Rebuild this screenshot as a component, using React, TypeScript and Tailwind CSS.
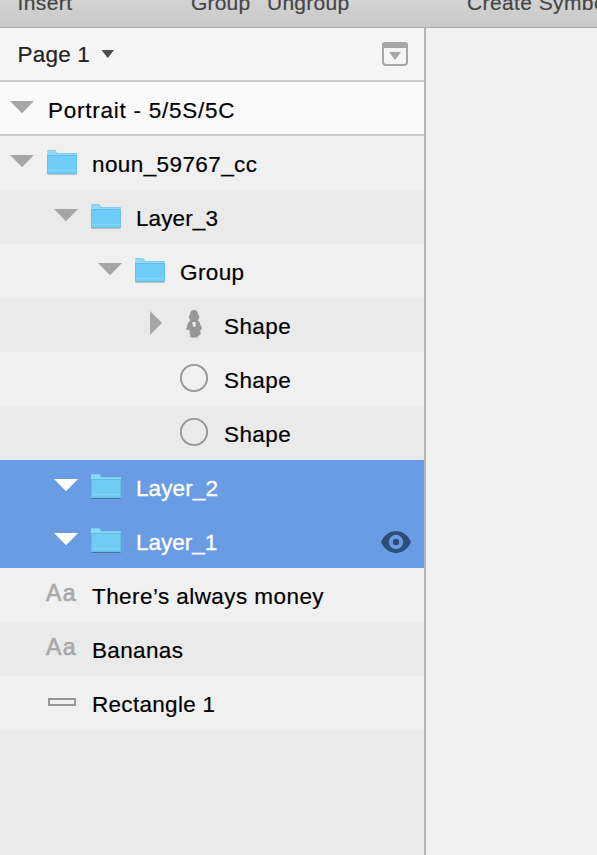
import React from "react";

type Kind = "folder" | "figure" | "circle" | "text" | "rect";

interface Layer {
  name: string;
  kind: Kind;
  indent: string;
  tracking: string;
  arrow?: "down" | "right";
  selected?: boolean;
  eye?: boolean;
}

const layers: Layer[] = [
  { name: "noun_59767_cc", kind: "folder", indent: "pl-0", tracking: "tracking-[0.4px]", arrow: "down" },
  { name: "Layer_3", kind: "folder", indent: "pl-[44px]", tracking: "tracking-[0.1px]", arrow: "down" },
  { name: "Group", kind: "folder", indent: "pl-[88px]", tracking: "tracking-[0.4px]", arrow: "down" },
  { name: "Shape", kind: "figure", indent: "pl-[132px]", tracking: "tracking-[0.4px]", arrow: "right" },
  { name: "Shape", kind: "circle", indent: "pl-[132px]", tracking: "tracking-[0.4px]" },
  { name: "Shape", kind: "circle", indent: "pl-[132px]", tracking: "tracking-[0.4px]" },
  { name: "Layer_2", kind: "folder", indent: "pl-[44px]", tracking: "tracking-[0.1px]", arrow: "down", selected: true },
  { name: "Layer_1", kind: "folder", indent: "pl-[44px]", tracking: "tracking-[0px]", arrow: "down", selected: true, eye: true },
  { name: "There’s always money", kind: "text", indent: "pl-0", tracking: "tracking-[0.43px]" },
  { name: "Bananas", kind: "text", indent: "pl-0", tracking: "tracking-[0.35px]" },
  { name: "Rectangle 1", kind: "rect", indent: "pl-0", tracking: "tracking-[0.3px]" },
];

function Arrow({ dir, className }: { dir: "down" | "right"; className: string }) {
  return (
    <svg className={className} width="44" height="54" viewBox="0 0 44 54">
      <path d={dir === "down" ? "M10 19H34L22 31.2Z" : "M18 13V37L30 25Z"} fill="currentColor" />
    </svg>
  );
}

function FolderIcon({ selected }: { selected?: boolean }) {
  return (
    <svg width="44" height="54" viewBox="0 0 44 54">
      <path d="M3.5 38.5H32.5" stroke="#000" strokeOpacity={selected ? ".28" : ".2"} />
      <path
        d="M3 37V15Q3 14 4 14H10.5Q11.5 14 12 15L13.2 17H32Q33 17 33 18V37Q33 38 32 38H4Q3 38 3 37Z"
        fill={selected ? "#8bd8fa" : "#92dafd"}
      />
      <path d="M3 19H33V37Q33 38 32 38H4Q3 38 3 37Z" fill={selected ? "#70ccf3" : "#6fcdfa"} />
      <path d="M3.5 19V37.5H32.5V19" fill="none" stroke="#5fb9e4" strokeOpacity=".65" />
      <path d="M3 19.5H33" stroke="#62bae3" strokeOpacity=".9" />
      <path d="M4 14.5H10.5L12.5 17.5H32.5" fill="none" stroke="#6fc3e8" strokeOpacity=".55" />
      <path d="M4 34.5H32" stroke="#93dcfc" strokeOpacity=".6" />
    </svg>
  );
}

function LayerIcon({ kind, selected }: { kind: Kind; selected?: boolean }) {
  switch (kind) {
    case "folder":
      return <FolderIcon selected={selected} />;
    case "text":
      return (
        <span className="w-[44px] pl-[2px] pt-[11px] text-[23px] leading-[28px] tracking-[1.5px] text-[#a9a9a9] [-webkit-text-stroke:0.7px_#a9a9a9]">
          Aa
        </span>
      );
    case "circle":
      return (
        <svg width="44" height="54" viewBox="0 0 44 54">
          <circle cx="18" cy="26" r="13.1" fill="none" stroke="#979797" strokeWidth="1.9" />
        </svg>
      );
    case "rect":
      return (
        <svg width="44" height="54" viewBox="0 0 44 54">
          <rect x="5" y="23" width="26" height="6" fill="none" stroke="#979797" strokeWidth="2" />
        </svg>
      );
    default:
      return (
        <svg width="44" height="54" viewBox="0 0 44 54">
          <path
            d="M16.2 12.3L18 12L20 12.4L21.6 14L22 16L23.4 18.2L22.8 20.8L21.8 22.5L23.5 24L24.3 26.5L25.8 29.5L25.6 31.7L23.8 32.5L24.8 34L24.4 36.5L22.5 37.8L21.5 38.6L21.5 39.8L19 39.4L17.5 39.8L14.5 39.6L14.4 38L13.6 35.8L13.8 32.3L11 32L10 30.8L11 28.2L12 25L14.2 22.5L13.2 20.5L12.8 18.5L14 16.4L14.4 14.2Z"
            fill="#979797"
          />
          <path d="M16.3 24H19.7V28.8H17Z" fill="#ebebeb" />
        </svg>
      );
  }
}

function LayerRow({ layer, odd }: { layer: Layer; odd: boolean }) {
  const tone = layer.selected
    ? "bg-[#6a9ce4] text-white [-webkit-text-stroke:0.3px_#fff]"
    : odd
      ? "bg-[#eaeaea] text-black [-webkit-text-stroke:0.2px_#000]"
      : "bg-[#f0f0f0] text-black [-webkit-text-stroke:0.2px_#000]";
  return (
    <li className={`flex h-[54px] ${layer.indent} ${tone}`}>
      {layer.arrow ? (
        <Arrow dir={layer.arrow} className={layer.selected ? "text-white" : "text-[#a6a6a6]"} />
      ) : (
        <span className="w-[44px]" />
      )}
      <LayerIcon kind={layer.kind} selected={layer.selected} />
      <span className={`flex-1 whitespace-nowrap pl-[4px] pt-[15px] leading-[28px] ${layer.tracking}`}>{layer.name}</span>
      {layer.eye && (
        <svg className="mr-[12px]" width="32" height="54" viewBox="0 0 32 54">
          <path
            d="M1 28C4.5 20.5 10 17 16 17S27.5 20.5 31 28C27.5 35.5 22 39 16 39S4.5 35.5 1 28Z"
            fill="#2c4f79"
          />
          <circle cx="16" cy="28" r="5.2" fill="#2c4f79" stroke="#6a9ce4" strokeWidth="4" />
        </svg>
      )}
    </li>
  );
}

export default function App() {
  return (
    <div className="flex h-[855px] w-[597px] flex-col overflow-hidden bg-[#f1f1f1] font-['Liberation_Sans',Arial,sans-serif] text-[22.5px]">
      <header className="flex h-[28px] shrink-0 overflow-hidden whitespace-nowrap border-b border-[#a8a8a8] bg-linear-to-b from-[#d3d2d3] to-[#cac9ca] pl-[17.5px] text-[21px] leading-[24px] text-[#454545] [-webkit-text-stroke:0.2px_#454545]">
        <span className="-mt-[9px] w-[173.5px] shrink-0 tracking-[0.4px]">Insert</span>
        <span className="-mt-[9px] w-[76px] shrink-0 tracking-[0.2px]">Group</span>
        <span className="-mt-[9px] w-[200px] shrink-0 tracking-[0.25px]">Ungroup</span>
        <span className="-mt-[9px] shrink-0 tracking-[0.4px]">Create Symbol</span>
      </header>
      <div className="flex min-h-0 flex-1">
        <aside className="flex w-[426px] shrink-0 flex-col border-r-2 border-[#b6b6b6] bg-[#eaeaea]">
          <div className="flex h-[54px] border-b-2 border-[#c8c8c8] bg-[#f5f5f5] pl-[17.5px] text-[#222]">
            <span className="w-[83.5px] pt-[13px] leading-[28px] tracking-[0.2px] [-webkit-text-stroke:0.2px_#222]">Page 1</span>
            <svg width="14" height="52" viewBox="0 0 14 52">
              <path d="M0.5 22H13L6.750 30Z" fill="#4d4d4d" />
            </svg>
            <svg className="ml-auto mr-[16px]" width="26" height="52" viewBox="0 0 26 52">
              <rect x="1" y="15" width="24" height="22" rx="3" fill="none" stroke="#a6a6a6" strokeWidth="2" />
              <path d="M0 20V17Q0 14 3 14H23Q26 14 26 17V20ZM7 24H19L13 32Z" fill="#a6a6a6" />
            </svg>
          </div>
          <div className="flex h-[54px] border-b-2 border-[#c8c8c8] bg-[#fafafa]">
            <Arrow dir="down" className="text-[#a6a6a6]" />
            <span className="pl-[4px] pt-[15px] leading-[28px] tracking-[0.75px] [-webkit-text-stroke:0.2px_#000]">
              Portrait - 5/5S/5C
            </span>
          </div>
          <ul>
            {layers.map((layer, i) => (
              <LayerRow key={i} layer={layer} odd={i % 2 === 1} />
            ))}
          </ul>
        </aside>
        <main className="flex-1 bg-[#f1f1f1]" />
      </div>
    </div>
  );
}
